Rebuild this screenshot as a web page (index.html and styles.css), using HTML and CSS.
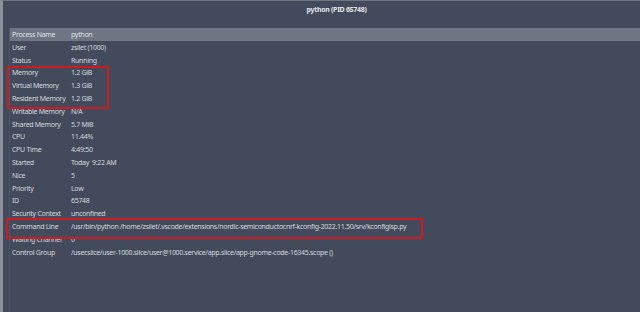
FILE: index.html
```html
<!DOCTYPE html>
<html lang="en">
<head>
    <meta charset="UTF-8">
    <title>python (PID 65748)</title>
    <link rel="stylesheet" href="styles.css">
</head>
<body>
    <div class="window">
        <div class="titlebar">python (PID 65748)</div>

        <div class="tree">
            <div class="row head">
                <span class="label">Process Name</span>
                <span class="value">python</span>
            </div>
            <div class="row"><span class="label">User</span><span class="value">zsilet (1000)</span></div>
            <div class="row"><span class="label">Status</span><span class="value">Running</span></div>

            <div class="mark mark-memory">
                <div class="row"><span class="label">Memory</span><span class="value">1.2 GiB</span></div>
                <div class="row"><span class="label">Virtual Memory</span><span class="value">1.3 GiB</span></div>
                <div class="row"><span class="label">Resident Memory</span><span class="value">1.2 GiB</span></div>
            </div>

            <div class="row"><span class="label">Writable Memory</span><span class="value">N/A</span></div>
            <div class="row"><span class="label">Shared Memory</span><span class="value">5.7 MiB</span></div>
            <div class="row"><span class="label">CPU</span><span class="value">11.44%</span></div>
            <div class="row"><span class="label">CPU Time</span><span class="value">4:49:50</span></div>
            <div class="row"><span class="label">Started</span><span class="value">Today&nbsp; 9:22 AM</span></div>
            <div class="row"><span class="label">Nice</span><span class="value">5</span></div>
            <div class="row"><span class="label">Priority</span><span class="value">Low</span></div>
            <div class="row"><span class="label">ID</span><span class="value">65748</span></div>
            <div class="row"><span class="label">Security Context</span><span class="value">unconfined</span></div>

            <div class="mark mark-cmd">
                <div class="row"><span class="label">Command Line</span><span class="value">/usr/bin/python /home/zsilet/.vscode/extensions/nordic-semiconductor.nrf-kconfig-2022.11.50/srv/kconfiglsp.py</span></div>
            </div>

            <div class="row"><span class="label">Waiting Channel</span><span class="value">0</span></div>
            <div class="row"><span class="label">Control Group</span><span class="value">/user.slice/user-1000.slice/user@1000.service/app.slice/app-gnome-code-16345.scope ()</span></div>
        </div>
    </div>
</body>
</html>
```

FILE: styles.css
```css
* {
    margin: 0;
    padding: 0;
    box-sizing: border-box;
}

body {
    background: #424a5b;
    font-family: 'Noto Sans', 'Open Sans', sans-serif;
    font-size: 7px;
    letter-spacing: -0.3px;
    color: #d5d8de;
    overflow: hidden;
}

.window {
    height: 312px;
    border-left: 3px solid #8c919a;
    border-top: 1px solid #6e7480;
    display: flex;
    flex-direction: column;
}

.titlebar {
    height: 27px;
    padding-top: 4px;
    padding-left: 30px;
    text-align: center;
    font-weight: 700;
    color: #e4e6ea;
}

.tree {
    flex: 1;
    margin-left: 6px;
    border-left: 1px solid #4d5566;
}

.row {
    display: flex;
    align-items: center;
    height: 12.8px;
    white-space: nowrap;
}

.head {
    height: 13px;
    background: #6f7683;
    color: #dfe2e7;
}

.label {
    width: 61px;
    padding-left: 2px;
    flex-shrink: 0;
}

.mark {
    position: relative;
}

.mark::after {
    content: '';
    position: absolute;
    border: 2px solid #cc1b22;
    pointer-events: none;
}

.mark-memory::after {
    left: -3px;
    top: -1px;
    width: 98px;
    height: 39px;
}

.mark-cmd::after {
    left: -4px;
    top: -2px;
    width: 413px;
    height: 17px;
}
```
